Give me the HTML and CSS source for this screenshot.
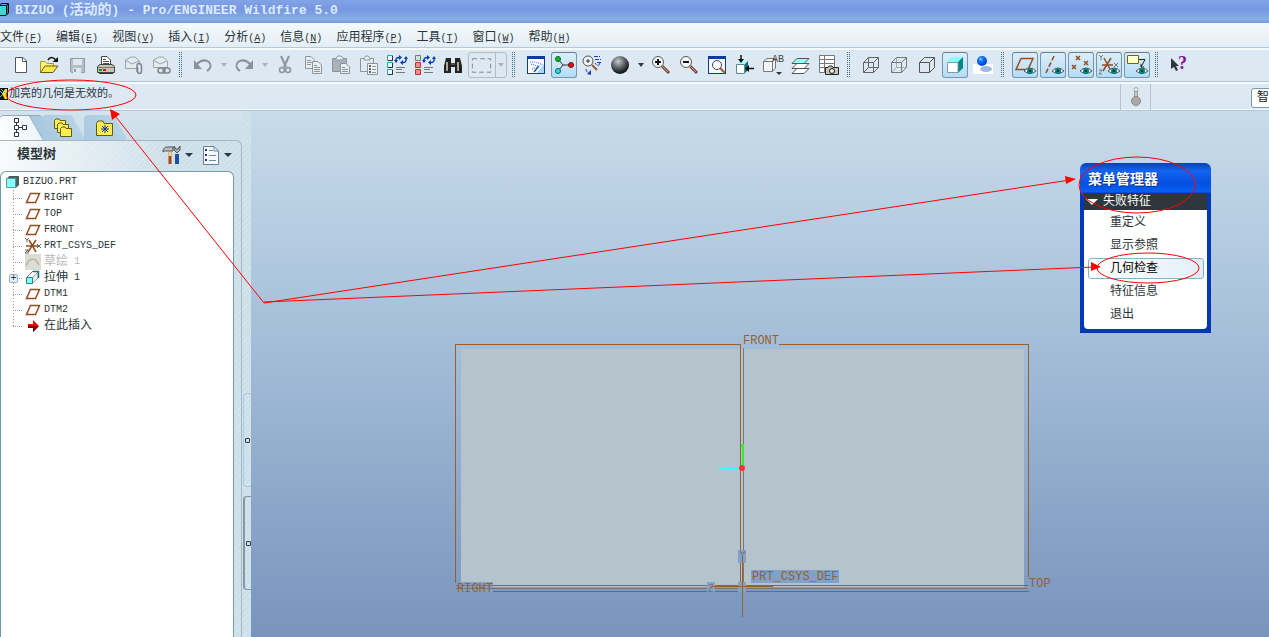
FILE: index.html
```html
<!doctype html>
<html lang="zh-CN">
<head>
    <meta charset="UTF-8">
    <title>BIZUO (活动的) - Pro/ENGINEER Wildfire 5.0</title>
    <link rel="stylesheet" href="styles.css">
</head>
<body>
<svg class="defs" width="0" height="0">
    <defs>
        <radialGradient id="ball" cx="40%" cy="30%" r="65%">
            <stop offset="0" stop-color="#c8ccd0"/>
            <stop offset=".5" stop-color="#666c72"/>
            <stop offset="1" stop-color="#14181c"/>
        </radialGradient>
        <radialGradient id="blue" cx="38%" cy="32%" r="65%">
            <stop offset="0" stop-color="#8cf"/>
            <stop offset=".4" stop-color="#0a6cff"/>
            <stop offset="1" stop-color="#0046d0"/>
        </radialGradient>
        <symbol id="eye" viewBox="0 0 12 8">
            <path d="M0 4Q6-2 12 4Q6 9 0 4z" fill="#fff" stroke="#555"/>
            <circle cx="6" cy="4" r="3" fill="#00807c"/>
            <circle cx="6" cy="4" r="1" fill="#023"/>
        </symbol>
        <symbol id="plane" viewBox="0 0 16 12">
            <path d="M5.500 1.500H14.500L10.500 10.500H1.500z" fill="none" stroke="#964b1e" stroke-width="1.500"/>
        </symbol>
        <symbol id="cycle" viewBox="0 0 14 10">
            <path d="M2 7Q1 2 6 2.500M12 3Q13 8 8 7.500" fill="none" stroke="#0a3cb4" stroke-width="1.500"/>
            <path d="M5 0L8 2.500L5 5zM9 5L6 7.500L9 10zM0 5H4L2 8zM10 4H14L12 1z" fill="#0a3cb4"/>
        </symbol>
    </defs>
</svg>

<header class="title">
    <svg class="app_icon" width="10" height="14" viewBox="0 0 10 14"><path d="M0 2H6V12H0z" fill="#3fd6d6"/><path d="M6 2L8 1V10L6 12z" fill="#666"/><path d="M0 1.500L2 .5H8.500V10L6 12.500H0M6.500 3V12M0 2.500H6L8 1" fill="none" stroke="#111"/></svg>
    <h1>BIZUO (<span>活动的</span>) - Pro/ENGINEER Wildfire 5.0</h1>
</header>

<nav class="menu">
    <button>文件<span>(<u>F</u>)</span></button>
    <button>编辑<span>(<u>E</u>)</span></button>
    <button>视图<span>(<u>V</u>)</span></button>
    <button>插入<span>(<u>I</u>)</span></button>
    <button>分析<span>(<u>A</u>)</span></button>
    <button>信息<span>(<u>N</u>)</span></button>
    <button>应用程序<span>(<u>P</u>)</span></button>
    <button>工具<span>(<u>T</u>)</span></button>
    <button>窗口<span>(<u>W</u>)</span></button>
    <button>帮助<span>(<u>H</u>)</span></button>
</nav>

<div class="toolbar">
    <div class="group">
        <button class="tool"><svg viewBox="0 0 20 20"><path d="M4.500 2.500H12L15.500 6V17.500H4.500z" fill="#fff" stroke="#555"/><path d="M11.500 2.500V6.500H15.500" fill="none" stroke="#555"/></svg></button>
        <button class="tool"><svg viewBox="0 0 20 20"><path d="M1.500 17.500V6.500H6L8 8.500H14.500V11" fill="#fff27a" stroke="#aa9a20"/><path d="M1.500 17.500L6 11H19L14 17.500z" fill="#ffe94a" stroke="#665c10"/><path d="M9 5Q12 0 17 5" fill="none" stroke="#111" stroke-width="1.500"/><path d="M19 2V7H13.500z" fill="#111"/></svg></button>
        <button class="tool"><svg viewBox="0 0 20 20"><path d="M3.500 3.500H17.500V17.500H4.500L3.500 16z" fill="#b4bec6" stroke="#939ca3"/><path d="M6 4H15V10H6z" fill="#dfe8ee"/><path d="M6 13H14V18H6z" fill="#dfe8ee"/><path d="M7 14H9V17H7z" fill="#939ca3"/></svg></button>
        <button class="tool"><svg viewBox="0 0 20 20"><path d="M6.500 10V1.500H12L15.500 5V10z" fill="#fff" stroke="#444"/><path d="M8 4.500H11M8 6.500H14M8 8.500H14" stroke="#555"/><path d="M2.500 11.500L5 9.500H17L19.500 11.500V17.500H2.500z" fill="#c6c4b4" stroke="#444"/><path d="M3 12.500H19" stroke="#777"/><path d="M4 14H7V16H4z" fill="#090"/><path d="M8 14H11V16H8z" fill="#d00"/><path d="M4 18.500H18" stroke="#333"/></svg></button>
        <button class="tool"><svg viewBox="0 0 20 20"><path d="M2.500 13.500V5L8 2H12L16.500 6V13.500zM3 5.500L9 9L16 6" fill="#e4ebf0" stroke="#9aa3a9"/><path d="M14 17V11Q14 8.500 16 8.500T18.500 11V16Q18.500 18.500 16.500 18.500T14.500 16V12" fill="#dce9f3" stroke="#7d868c" stroke-width="1.500"/></svg></button>
        <button class="tool"><svg viewBox="0 0 20 20"><path d="M2.500 12.500V5L8 2H12L16.500 6V12.500zM3 5.500L9 9L16 6" fill="#e4ebf0" stroke="#9aa3a9"/><rect x="7" y="13" width="7" height="5" rx="2.500" fill="#dce9f3" stroke="#7d868c" stroke-width="1.500"/><rect x="12" y="13" width="7" height="5" rx="2.500" fill="none" stroke="#7d868c" stroke-width="1.500"/></svg></button>
    </div>
    <i class="grip"></i>
    <div class="group">
        <button class="tool"><svg viewBox="0 0 20 20"><path d="M4 9Q10 3 16 7Q20 12 14 16" fill="none" stroke="#87929a" stroke-width="2"/><path d="M1 5V14H9z" fill="#87929a"/></svg></button>
        <button class="drop off"></button>
        <button class="tool"><svg viewBox="0 0 20 20"><path d="M16 9Q10 3 4 7Q0 12 6 16" fill="none" stroke="#87929a" stroke-width="2"/><path d="M19 5V14H11z" fill="#87929a"/></svg></button>
        <button class="drop off"></button>
        <button class="tool"><svg viewBox="0 0 20 20"><path d="M6 1L11 12M14 1L9 12" fill="none" stroke="#8b959b" stroke-width="2"/><circle cx="7" cy="15" r="2.500" fill="none" stroke="#8b959b" stroke-width="1.500"/><circle cx="13" cy="15" r="2.500" fill="none" stroke="#8b959b" stroke-width="1.500"/></svg></button>
        <button class="tool"><svg viewBox="0 0 20 20"><path d="M2.500 1.500H8L11.500 5V13.500H2.500z" fill="#e8eef2" stroke="#8b959b"/><path d="M4 5.500H8M4 7.500H10M4 9.500H8" stroke="#8b959b"/><path d="M9.500 6.500H15L18.500 10V18.500H9.500z" fill="#e8eef2" stroke="#8b959b"/><path d="M11 10.500H14M11 12.500H17M11 14.500H17M11 16.500H17" stroke="#8b959b"/></svg></button>
        <button class="tool"><svg viewBox="0 0 20 20"><path d="M1.500 3.500H15.500V16.500H1.500z" fill="#a9b2b8" stroke="#8b959b"/><path d="M5 5V3L7 1H10L12 3V5z" fill="#e8eef2" stroke="#8b959b"/><path d="M9.500 8.500H15L18.500 12V18.500H9.500z" fill="#e8eef2" stroke="#8b959b"/><path d="M11 12.500H14M11 14.500H17M11 16.500H17" stroke="#8b959b"/></svg></button>
        <button class="tool"><svg viewBox="0 0 20 20"><path d="M1.500 3.500H14.500V16.500H1.500z" fill="#e2eaf0" stroke="#8b959b"/><path d="M5 5V3L7 1H9L11 3V5z" fill="#e8eef2" stroke="#8b959b"/><path d="M8.500 8.500H18.500V19.500H8.500z" fill="#eef3f6" stroke="#8b959b"/><path d="M10 11H12M10 14H12M10 17H12" stroke="#666" stroke-width="2"/><path d="M13 11.500H17M13 14.500H17M13 17.500H17" stroke="#8b959b"/></svg></button>
        <button class="tool"><svg viewBox="0 0 20 20"><path d="M.5.5H5.500V5.500H.5zM.5 7.500H5.500V12.500H.5zM.5 14.500H5.500V19.500H.5z" fill="#e6ffff" stroke="#2aa"/><path d="M5.500 1V5.500H1M5.500 8V12.500H1M5.500 15V19.500H1" fill="none" stroke="#333"/><use href="#cycle" x="7" y="0" width="14" height="10"/><path d="M9 12.500H18M9 14.500H15M9 17.500H18" stroke="#777"/></svg></button>
        <button class="tool"><svg viewBox="0 0 20 20"><path d="M.5.5H5.500V5.500H.5z" fill="#ddd" stroke="#777"/><path d="M.5 7.500H5.500V12.500H.5zM.5 14.500H5.500V19.500H.5z" fill="#f88" stroke="#b33"/><use href="#cycle" x="7" y="0" width="14" height="10"/><path d="M9 12.500H18M9 14.500H15M9 17.500H18" stroke="#777"/></svg></button>
        <button class="tool"><svg viewBox="0 0 20 20"><path d="M3 3H8V8H12V3H17L19 11V18H12V12H8V18H1V11z" fill="#222"/><path d="M4 7V16M15 7V16" stroke="#aaa89a" stroke-width="2"/><path d="M8 9H12" stroke="#777"/></svg></button>
        <button class="select_box"><svg viewBox="0 0 27 26"><rect x="3.500" y="6.500" width="19" height="14" fill="none" stroke="#7f888f" stroke-dasharray="5 3"/></svg><i class="arrow off"></i></button>
    </div>
    <i class="grip"></i>
    <div class="group">
        <button class="tool"><svg viewBox="0 0 20 20"><path d="M1 1H19V19H1z" fill="#0a3ca0"/><path d="M2 4H18V18H2z" fill="#fff"/><path d="M18 9L11 18H18z" fill="#a8d4ff"/><path d="M4 7Q12 7 17 10M5 9L12 11M6 14L12 12M8 16L15 9" fill="none" stroke="#2860c0" stroke-dasharray="1 1"/><path d="M8 17L13 11" stroke="#2860c0" stroke-width="1.500"/></svg></button>
        <button class="tool on"><svg viewBox="0 0 20 20"><path d="M4 4L9 10L4 16M9 10H17" fill="none" stroke="#333"/><circle cx="4" cy="4" r="2.500" fill="#1b1" stroke="#063"/><circle cx="17" cy="10" r="2.500" fill="#e11" stroke="#700"/><circle cx="4" cy="16" r="2.500" fill="#3dd" stroke="#066"/></svg></button>
        <button class="tool"><svg viewBox="0 0 20 20"><circle cx="6" cy="6" r="5" fill="#eef5f8" stroke="#555"/><path d="M6 4V8M4 6H8" stroke="#333"/><path d="M10 10L15 15" stroke="#9a5a30" stroke-width="2"/><path d="M12 1.500H18M13 4.500H19M15 7.500H19M18 8Q16 13 13 8M4 14Q4 18 9 18" fill="none" stroke="#2040b0" stroke-dasharray="4 1"/><path d="M9 15V20L5 19z" fill="#2040b0"/></svg></button>
        <button class="tool"><svg viewBox="0 0 20 20"><circle cx="10" cy="10" r="9" fill="url(#ball)"/></svg></button>
        <button class="drop"></button>
        <button class="tool"><svg viewBox="0 0 20 20"><path d="M11 11L18 18" stroke="#744" stroke-width="3"/><path d="M11 11L17 17" stroke="#d99b66"/><circle cx="7" cy="7" r="5.500" fill="#f8fafb" stroke="#555"/><path d="M7 4V10M4 7H10" stroke="#111" stroke-width="2"/></svg></button>
        <button class="tool"><svg viewBox="0 0 20 20"><path d="M11 11L18 18" stroke="#744" stroke-width="3"/><path d="M11 11L17 17" stroke="#d99b66"/><circle cx="7" cy="7" r="5.500" fill="#f8fafb" stroke="#555"/><path d="M4 7H10" stroke="#111" stroke-width="2"/></svg></button>
        <button class="tool"><svg viewBox="0 0 20 20"><path d="M1 1H19V19H1z" fill="#0a3ca0"/><path d="M2 4H18V18H2z" fill="#f4f8fa"/><circle cx="10" cy="10" r="4.500" fill="#fff" stroke="#444"/><path d="M13 13L18 18" stroke="#9a5a30" stroke-width="2"/></svg></button>
        <button class="tool"><svg viewBox="0 0 20 20"><path d="M2 9L5 6H13L10 9z" fill="#aff"/><path d="M1.500 9.500H9.500V18.500H1.500z" fill="#fff" stroke="#5a8f8f"/><path d="M10 9L13 6V15L10 18z" fill="#077"/><path d="M6 0V5M13 13.500H19" stroke="#111" stroke-width="1.500"/><path d="M3 4H9L6 8zM14 10V17L10 13.500z" fill="#111"/></svg></button>
        <button class="tool"><svg viewBox="0 0 20 20"><path d="M.5 6.500L4 3.500H12.500V13L9.500 16.500H.5zM.5 6.500H9.500V16.500M9.500 6.500L12 4" fill="#f3f6f8" stroke="#777"/><path d="M13 17H19L16 20z" fill="#333"/><text x="9" y="7" class="ab">AB</text></svg></button>
        <button class="tool"><svg viewBox="0 0 20 20"><path d="M1 18.500L6 13.500H18L13 18.500z" fill="#fff" stroke="#555"/><path d="M1 13.500L6 8.500H18L13 13.500z" fill="#fff" stroke="#555"/><path d="M1 8.500L6 3.500H18L13 8.500z" fill="#9ff" stroke="#555"/></svg></button>
        <button class="tool"><svg viewBox="0 0 20 20"><path d="M.5.5H15.500V17.500H.5zM5.500.5V17M.5 4.500H15M.5 8.500H15M.5 12.500H15" fill="#fff" stroke="#777"/><path d="M6.500 12.500H9L10 11H13L14 12.500H19.500V19.500H6.500z" fill="#c8c6ba" stroke="#222"/><circle cx="13" cy="16" r="2.500" fill="#eee" stroke="#111"/></svg></button>
    </div>
    <i class="grip"></i>
    <div class="group">
        <button class="tool"><svg viewBox="0 0 20 20"><path d="M2.500 7.500H12.500V17.500H2.500zM7.500 2.500H17.500V12.500H7.500zM2.500 7.500L7.500 2.500M12.500 7.500L17.500 2.500M12.500 17.500L17.500 12.500M2.500 17.500L7.500 12.500" fill="none" stroke="#666"/></svg></button>
        <button class="tool"><svg viewBox="0 0 20 20"><path d="M7.500 3V12.500H17M2.500 17.500L7.500 12.500" fill="none" stroke="#aaa"/><path d="M2.500 7.500H12.500V17.500H2.500zM2.500 7.500L7.500 2.500H17.500V12.500L12.500 17.500M12.500 7.500L17.500 2.500" fill="none" stroke="#777"/></svg></button>
        <button class="tool"><svg viewBox="0 0 20 20"><path d="M2.500 7.500H12.500V17.500H2.500zM2.500 7.500L7.500 2.500H17.500V12.500L12.500 17.500M12.500 7.500L17.500 2.500" fill="none" stroke="#555"/></svg></button>
        <button class="tool on"><svg viewBox="0 0 20 20"><path d="M2 7L6 2H18L13 7z" fill="#8ff"/><path d="M13 7L18 2V13L13 18z" fill="#088"/><path d="M2.500 7.500H13V17.500H2.500z" fill="#fff" stroke="#899"/></svg></button>
        <button class="tool"><svg viewBox="0 0 20 20"><path d="M0 9H20V19H0z" fill="#fff"/><ellipse cx="13" cy="14" rx="6" ry="3" fill="#9db8dc"/><circle cx="9" cy="6" r="5" fill="url(#blue)"/></svg></button>
    </div>
    <i class="grip"></i>
    <div class="group">
        <button class="tool on"><svg viewBox="0 0 20 20"><path d="M6 3.500H18L13 14.500H1z" fill="none" stroke="#964b1e" stroke-width="1.500"/><use href="#eye" x="9" y="12" width="12" height="8"/></svg></button>
        <button class="tool on"><svg viewBox="0 0 20 20"><path d="M11 1L3 18" fill="none" stroke="#964b1e" stroke-width="1.500" stroke-dasharray="5 2"/><use href="#eye" x="9" y="12" width="12" height="8"/></svg></button>
        <button class="tool on"><svg viewBox="0 0 20 20"><path d="M5 1L9 5M9 1L5 5M13 6L17 10M17 6L13 10M1 10L5 14M5 10L1 14" stroke="#964b1e" stroke-width="1.500"/><use href="#eye" x="9" y="12" width="12" height="8"/></svg></button>
        <button class="tool on"><svg viewBox="0 0 20 20"><path d="M3 10H14M5 3L12 16M12 3L4 16" stroke="#964b1e" stroke-width="1.500"/><path d="M0 0L2 2V5M4 0L2 2M0 15H3L0 19H3M15 8L19 12M19 8L15 12" fill="none" stroke="#777"/><use href="#eye" x="9" y="12" width="12" height="8"/></svg></button>
        <button class="tool on"><svg viewBox="0 0 20 20"><path d="M.5.5H11.500V8.500H.5z" fill="#ffc" stroke="#760"/><path d="M12 4.500H18L14 12M14 9V12H17" fill="none" stroke="#222"/><use href="#eye" x="9" y="12" width="12" height="8"/></svg></button>
    </div>
    <i class="grip"></i>
    <div class="group">
        <button class="tool"><svg viewBox="0 0 20 20"><path d="M2 3V14L5 12L7 16L9 15L7 11H10z" fill="#2d373d"/><text x="9" y="14" class="help">?</text></svg></button>
    </div>
</div>

<div class="message">
    <svg class="warn" width="8" height="12" viewBox="0 0 8 12"><path d="M0 0H8V12H0z" fill="#111"/><path d="M5 1H7V11H5L2 6z" fill="#fe0"/><path d="M0 3L3 6L0 9M1 1L5 5" fill="none" stroke="#6cc"/></svg>
    <p>加亮的几何是无效的。</p>
    <div class="status"><svg width="12" height="20" viewBox="0 0 12 20"><circle cx="6" cy="2.500" r="2" fill="none" stroke="#aaa"/><path d="M4.500 4.500H7.500V11H4.500z" fill="#ccc" stroke="#999"/><circle cx="6" cy="14" r="4.500" fill="#aaa" stroke="#888"/></svg></div>
    <select class="filter" aria-label="过滤器"><option>智</option></select>
</div>

<main class="main">
    <aside class="side">
        <div class="tabs">
            <button class="tab select"><svg width="14" height="20" viewBox="0 0 14 20"><path d="M.5.500H4.500V4.500H.5zM.5 7.500H4.500V11.500H.5zM.5 14.500H4.500V18.500H.5zM8.500 7.500H12.500V11.500H8.500zM2.500 5V7M2.500 12V14M5 9.500H8" fill="#fff" stroke="#333"/></svg></button>
            <button class="tab"><svg width="20" height="20" viewBox="0 0 20 20"><g fill="#ffee50" stroke="#665a10"><path d="M1.500 2.500L3 1H6L7 2.500H12.500V10.500H1.500z"/><path d="M4.500 6.500L6 5H9L10 6.500H15.500V14.500H4.500z"/><path d="M7.500 10.500L9 9H12L13 10.500H18.500V18.500H7.500z"/></g></svg></button>
            <button class="tab"><svg width="18" height="16" viewBox="0 0 18 16"><path d="M.5 3.500L2 1H7L8 3.500H16.500V15.500H.5z" fill="#ffee50" stroke="#665a10"/><path d="M9 5V13M5 9H13M6 6L12 12M12 6L6 12" stroke="#1030a0"/></svg></button>
        </div>
        <div class="panel">
            <div class="panel_head">
                <h2>模型树</h2>
                <button class="tool"><svg viewBox="0 0 20 20"><path d="M1 5Q3 1 6 2H11V6H5Q3 5 1 7z" fill="#b8c0c4" stroke="#555"/><path d="M8 7V19" stroke="#b04010" stroke-width="3"/><path d="M8 7V11" stroke="#eed890" stroke-width="3"/><path d="M15 9V19" stroke="#1c50a8" stroke-width="4"/><path d="M12 1V5L15 8L18 5V1L16 4H14z" fill="#aab" stroke="#555"/></svg></button>
                <i class="arrow"></i>
                <button class="tool list_tool"><svg viewBox="0 0 20 20"><path d="M2.500 1.500H13L17.500 6V19.500H2.500z" fill="#f4f9ff" stroke="#68809c"/><path d="M13 1.500V6H17" fill="none" stroke="#68809c"/><path d="M4 5H6M4 10H6M4 15H6" stroke="#334" stroke-width="2"/><path d="M8 5.500H12M8 10.500H15M8 15.500H15" stroke="#789"/></svg></button>
                <i class="arrow"></i>
            </div>
            <div class="tree">
                <div class="root"><svg width="13" height="12" viewBox="0 0 13 12"><path d="M1 3L3 .5H12.500V9L10 11.500z" fill="#466" stroke="#555"/><path d="M.5 2.500H9.500V11.500H.5z" fill="#8ff" stroke="#599"/></svg>BIZUO.PRT</div>
                <ul>
                    <li><svg width="16" height="12"><use href="#plane"/></svg>RIGHT</li>
                    <li><svg width="16" height="12"><use href="#plane"/></svg>TOP</li>
                    <li><svg width="16" height="12"><use href="#plane"/></svg>FRONT</li>
                    <li><svg width="16" height="16" viewBox="0 0 16 16"><path d="M1 8H13M4 2L11 14M11 2L3 14" stroke="#964b1e" stroke-width="1.500"/><path d="M0 0L2 2V4M4 0L2 2M0 12H3L0 15H4M12 6L16 10M16 6L12 10" fill="none" stroke="#666"/></svg>PRT_CSYS_DEF</li>
                    <li class="off"><svg width="16" height="16" viewBox="0 0 16 16"><path d="M0 0H16V16H0z" fill="#dcdcd6"/><path d="M1 12Q4 4 8 5Q11 5 14 11" fill="none" stroke="#bbb7a0" stroke-width="1.500"/></svg><span>草绘</span> 1</li>
                    <li><button class="expand" aria-label="展开">+</button><svg width="16" height="16" viewBox="0 0 16 16"><path d="M7.500 7.500L13 2V8L7.500 13.500z" fill="#eee" stroke="#999"/><path d="M2 7L8 1" fill="none" stroke="#777"/><path d="M8 1.500H13.500V8" fill="none" stroke="#177" stroke-width="1.500"/><path d="M1.500 7.500H7.500V13.500H1.500z" fill="#8ff" stroke="#288"/></svg><span>拉伸</span> 1</li>
                    <li><svg width="16" height="12"><use href="#plane"/></svg>DTM1</li>
                    <li><svg width="16" height="12"><use href="#plane"/></svg>DTM2</li>
                    <li><svg width="16" height="12" viewBox="0 0 16 12"><path d="M3 4H8V0L14 6L8 12V8H3z" fill="#e00"/><path d="M3 6H14L8 12V8H3z" fill="#800"/></svg><span>在此插入</span></li>
                </ul>
            </div>
        </div>
        <div class="splitter">
            <button class="handle" aria-label="收起"></button>
            <button class="handle dark" aria-label="展开"></button>
        </div>
    </aside>

    <section class="canvas">
        <svg class="model">
            <g transform="translate(-251 -111)" shape-rendering="crispEdges">
                <path d="M461 349H1024V587H461z" fill="#b5c3cc"/>
                <g fill="none" stroke="#96602f">
                    <path d="M741 344.500H455.500V583M779 344.500H1028.500V577M740.500 345V586"/>
                    <path d="M456 585.500H1028M493 591.500H1029"/>
                </g>
                <path d="M743.500 348V586M456 588.500H1028" stroke="#77787f"/>
                <path d="M742.500 446V468" stroke="#30f030" stroke-width="2"/>
                <path d="M720 468.500H740" stroke="#30ffff"/>
                <path d="M719 467H722V470H719z" fill="#30ffff"/>
                <path d="M741 444H744V447H741z" fill="#30f030"/>
                <g fill="#83a0c6">
                    <path d="M738 550H746V563H738zM707 582H715V592H707zM738 582H746V592H738zM751 570H839V583H751zM457 582H493V592H457z"/>
                </g>
                <path d="M742.500 555V617M711 586.500H773" stroke="#96602f"/>
                <path d="M740 551L742.500 555L745 551M709 584H713L709 591H713M457 585.500H493M457 588.500H493" fill="none" stroke="#77787f"/>
            </g>
            <g transform="translate(-251 -111)">
                <circle cx="742" cy="468" r="3" fill="#ff3030"/>
                <g class="label">
                    <text x="743" y="344">FRONT</text>
                    <text x="1029" y="587">TOP</text>
                    <text x="457" y="592">RIGHT</text>
                    <text x="752" y="580">PRT_CSYS_DEF</text>
                </g>
            </g>
        </svg>

        <div class="manager">
            <h2>菜单管理器</h2>
            <h3><i class="arrow"></i>失败特征</h3>
            <div class="manager_list">
                <button>重定义</button>
                <button>显示参照</button>
                <button class="select">几何检查</button>
                <button>特征信息</button>
                <button>退出</button>
            </div>
        </div>
    </section>
</main>

<!-- red marks over the window -->
<svg class="marks">
    <g fill="none" stroke="#f00">
        <ellipse cx="71" cy="95" rx="65" ry="15"/>
        <ellipse cx="1137" cy="185" rx="58" ry="28"/>
        <ellipse cx="1148" cy="268" rx="51" ry="15"/>
        <path d="M112 112L264 303L1070 180M264 302L1094 267"/>
    </g>
    <path d="M110 109L120 114L112 120zM1076 179L1066 184L1065 176zM1101 267L1091 271V262z" fill="#f00"/>
</svg>
</body>
</html>
```
FILE: styles.css
```css
* {
    margin: 0;
    padding: 0;
    box-sizing: border-box;
    list-style: none;
}

body {
    position: relative;
    display: flex;
    flex-direction: column;
    min-height: 100vh;
    overflow: hidden;
    background: #dce9f3;
    color: #2b343a;
    font: 12px/16px "Liberation Mono", "Noto Sans CJK SC", monospace;
}

button {
    border: none;
    background: none;
    color: inherit;
    font: inherit;
}

.defs {
    position: absolute;
}

.title {
    display: flex;
    align-items: center;
    gap: 5px;
    height: 23px;
    padding-bottom: 3px;
    background: linear-gradient(#82a4e6, #7796e0 40%, #86aee8 85%, #7797d8);
}

.title h1 {
    color: #dcebff;
    font-size: 13px;
    white-space: pre;
}

.title h1 span {
    font-size: 14px;
}

.menu {
    display: flex;
    gap: 14px;
    height: 25px;
    padding-top: 4px;
    background: linear-gradient(#f4f9fc, #e4edf5);
    border-bottom: 1px solid #b4cad9;
}

.menu button {
    height: 20px;
    padding-top: 2px;
    white-space: nowrap;
}

.menu span {
    font-size: 10px;
}

.toolbar {
    display: flex;
    align-items: center;
    height: 34px;
    padding: 0 0 2px 8px;
    border-top: 2px solid #f4f9fc;
    border-bottom: 1px solid #b0c6d6;
}

.group {
    display: flex;
    gap: 2px;
}

.grip {
    width: 4px;
    height: 27px;
    margin: 0 7px 0 5px;
    background: repeating-linear-gradient(#dce9f3 0, #dce9f3 1px, transparent 1px, transparent 2px), repeating-linear-gradient(90deg, #3f6f90 0, #3f6f90 1px, #dce9f3 1px, #dce9f3 2px);
}

.tool {
    display: flex;
    flex: none;
    align-items: center;
    justify-content: center;
    width: 26px;
    height: 26px;
}

.tool svg {
    width: 20px;
    height: 20px;
    overflow: visible;
}

.tool.on {
    border: 1px solid #7297ae;
    border-top-color: #667c8a;
    border-radius: 3px;
    background: linear-gradient(#dceefa, #b4dcf8);
}

.ab {
    fill: #444;
    font-size: 10px;
}

.help {
    fill: #84108c;
    font: bold 18px "Liberation Serif", serif;
}

.drop {
    display: flex;
    align-items: center;
    justify-content: center;
    width: 11px;
}

.drop::before,
.arrow {
    content: "";
    width: 0;
    border: 3px solid transparent;
    border-top: 4px solid #2b3a44;
    border-bottom: none;
}

.drop.off::before,
.arrow.off {
    border-top-color: #a8b4bc;
}

.select_box {
    display: flex;
    align-items: center;
    gap: 2px;
    width: 39px;
    height: 26px;
    border: 1px solid #b2bcc2;
    border-radius: 3px;
}

.select_box svg {
    flex: none;
    width: 27px;
    height: 26px;
    border-right: 1px solid #b2bcc2;
}

.message {
    display: flex;
    gap: 1px;
    height: 29px;
    overflow: hidden;
    border-top: 2px solid #f4f9fc;
    border-bottom: 1px solid #b0c6d6;
    box-shadow: inset 0 -1px #f4f9fc;
}

.warn {
    flex: none;
    margin-top: 4px;
}

.message p {
    flex: 1;
    padding-top: 2px;
    font-size: 11px;
}

.status {
    display: flex;
    align-items: center;
    justify-content: center;
    width: 31px;
    margin-right: 99px;
    border: 1px solid #b8c4cc;
    border-width: 0 1px;
}

.filter {
    width: 28px;
    height: 20px;
    margin: 4px -10px 0 0;
    padding-left: 5px;
    appearance: none;
    border: 1px solid #7d99ab;
    border-radius: 3px;
    background: #fff;
    color: #222;
    font: inherit;
}

.main {
    display: flex;
    flex: 1;
}

.side {
    display: grid;
    grid-template: 29px 1fr / 242px 9px;
    flex: none;
    background: repeating-linear-gradient(135deg, #cddfe9 0, #cddfe9 3px, #d7e5ed 3px, #d7e5ed 4px);
}

.tabs {
    display: flex;
    padding-top: 4px;
    background: linear-gradient(#d4e3ed, #cddfe9);
}

.tab {
    display: flex;
    align-items: center;
    justify-content: center;
    width: 42px;
    border-radius: 4px 4px 0 0;
    background: linear-gradient(60deg, #a9c9e0, #b7d3e5 76%, transparent 79%);
}

.tab.select {
    background: linear-gradient(60deg, #fff, #edf4f8 76%, #9cb4c4 77%, #a9c9e0 80%);
    border-top: 1px solid #93a8b4;
}

.panel {
    display: flex;
    flex-direction: column;
    grid-row: 2;
    padding-right: 7px;
    border: 1px solid #a8b8c2;
    border-width: 1px 1px 0 0;
    border-radius: 0 6px 0 0;
    background: linear-gradient(90deg, #f8fbfc, transparent 70%);
}

.panel_head {
    display: flex;
    align-items: center;
    height: 30px;
    padding: 0 2px 2px 17px;
}

.panel_head h2 {
    flex: 1;
    font-size: 13px;
}

.panel_head .arrow {
    border-width: 4px 4px 0;
}

.panel_head .list_tool {
    margin-left: 5px;
}

.tree {
    flex: 1;
    padding: 2px 0 0 5px;
    border: 1px solid #7299b0;
    border-bottom: none;
    border-radius: 6px 6px 0 0;
    background: #fff;
    font-size: 10px;
}

.root {
    display: flex;
    align-items: center;
    gap: 4px;
    height: 16px;
}

.tree ul {
    margin-left: 7px;
    background: repeating-linear-gradient(#999 0, #999 1px, #fff 1px, #fff 3px) 0 0 / 1px 136px no-repeat;
}

.tree li {
    position: relative;
    display: flex;
    align-items: center;
    gap: 3px;
    height: 16px;
    white-space: pre;
}

.tree li::before {
    content: "";
    width: 9px;
    border-top: 1px dotted #999;
}

.tree li span {
    margin-right: -3px;
    font-size: 12px;
}

.tree .off {
    color: #b8b8b8;
}

.expand {
    position: absolute;
    left: -4px;
    width: 9px;
    height: 9px;
    border: 1px solid #8fb4cc;
    border-radius: 2px;
    background: #e4f2fb;
    font-size: 10px;
    line-height: 7px;
}

.splitter {
    display: flex;
    flex-direction: column;
    gap: 9px;
    grid-row: 1 / 3;
    grid-column: 2;
    padding: 282px 0 0 1px;
}

.handle {
    display: flex;
    align-items: center;
    justify-content: center;
    height: 94px;
    border: 1px solid #a5cce4;
    border-right: none;
    border-radius: 4px 0 0 4px;
}

.handle::before {
    content: "";
    width: 3px;
    height: 3px;
    border: 1px solid #2b3a44;
    border-radius: 1px;
}

.handle.dark {
    border-color: #8199a6;
    border-left-width: 2px;
}

.canvas {
    position: relative;
    flex: 1;
    background: linear-gradient(#c8dcea, #a3bdd8 45%, #8ba6c8 75%, #7995be);
}

.model {
    position: absolute;
    width: 100%;
    height: 100%;
}

.label {
    fill: #96602f;
    font-size: 12px;
}

.manager {
    position: absolute;
    top: 52px;
    left: 829px;
    width: 131px;
    padding: 0 4px 4px;
    border-radius: 6px 6px 0 0;
    background: linear-gradient(#0842b0, #1464f4 8px, #0450e0 20px, #0660f4 29px, #0238b8 30px);
}

.manager h2 {
    height: 30px;
    padding-left: 4px;
    color: #fff;
    font-size: 14px;
    line-height: 34px;
    text-shadow: 1px 1px #003080;
}

.manager h3 {
    display: flex;
    align-items: center;
    gap: 5px;
    height: 17px;
    padding-left: 2px;
    background: #2d373d;
    color: #fff;
    font-size: 12px;
    font-weight: normal;
}

.manager .arrow {
    border-width: 6px 6px 0;
    border-top-color: #fff;
}

.manager_list {
    display: flex;
    flex-direction: column;
    gap: 2px;
    padding: 2px 3px 4px 4px;
    border-radius: 0 0 4px 4px;
    background: #fff;
}

.manager_list button {
    height: 21px;
    padding-left: 21px;
    border: 1px solid transparent;
    border-radius: 3px;
    text-align: left;
    line-height: 20px;
}

.manager_list .select {
    border-color: #7cb4d0;
    background: linear-gradient(90deg, #fff, #e2eff8);
    color: #000;
}

.marks {
    position: absolute;
    top: 0;
    left: 0;
    width: 100%;
    height: 100%;
    pointer-events: none;
}
```
